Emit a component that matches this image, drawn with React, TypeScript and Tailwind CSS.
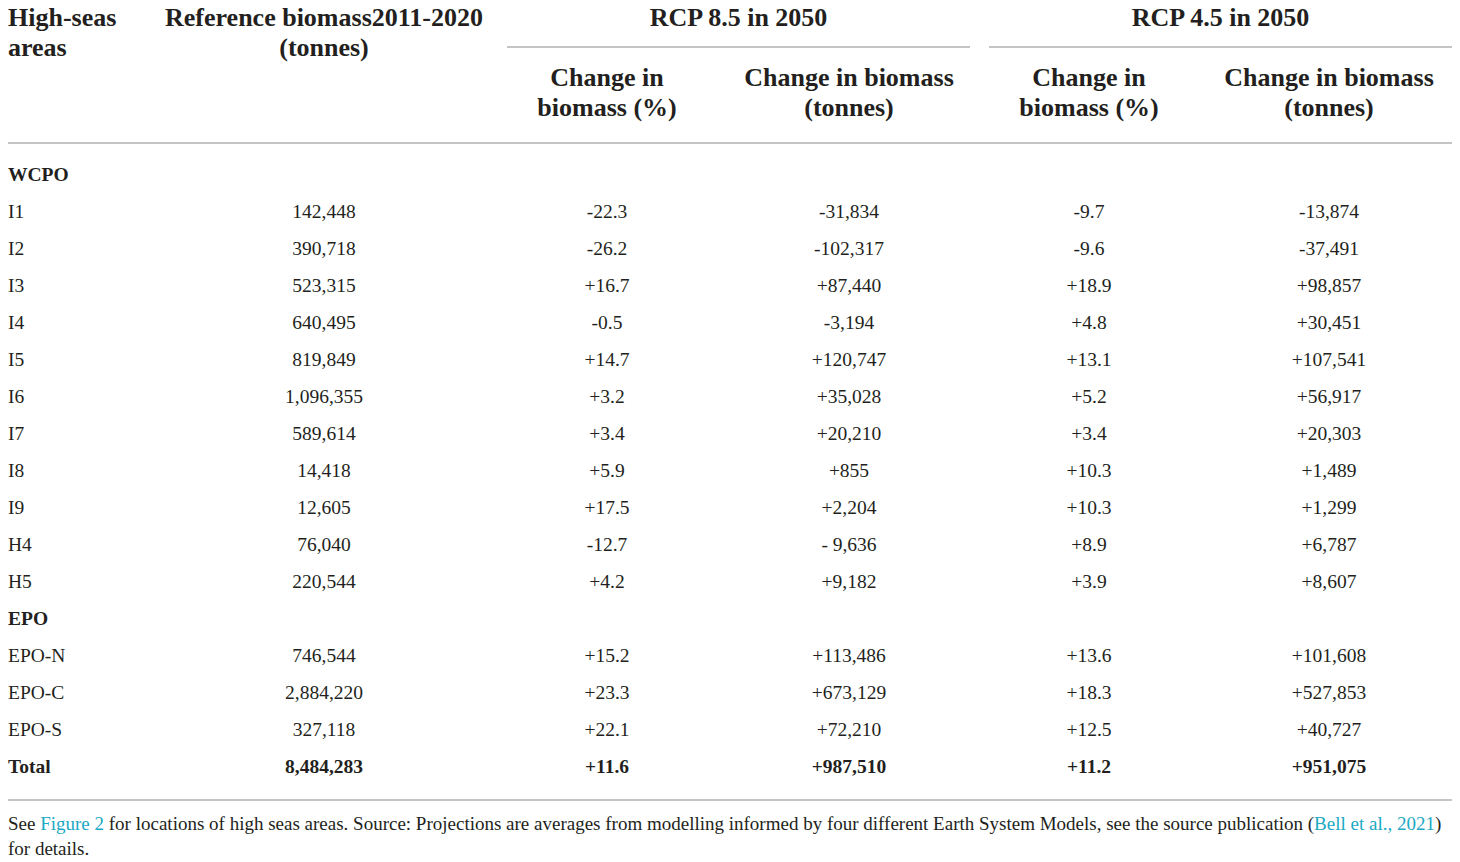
import React from 'react';

type Row = { area: string; ref: string; c85p: string; c85t: string; c45p: string; c45t: string; bold?: boolean };

const wcpo: Row[] = [
  { area: 'I1', ref: '142,448', c85p: '-22.3', c85t: '-31,834', c45p: '-9.7', c45t: '-13,874' },
  { area: 'I2', ref: '390,718', c85p: '-26.2', c85t: '-102,317', c45p: '-9.6', c45t: '-37,491' },
  { area: 'I3', ref: '523,315', c85p: '+16.7', c85t: '+87,440', c45p: '+18.9', c45t: '+98,857' },
  { area: 'I4', ref: '640,495', c85p: '-0.5', c85t: '-3,194', c45p: '+4.8', c45t: '+30,451' },
  { area: 'I5', ref: '819,849', c85p: '+14.7', c85t: '+120,747', c45p: '+13.1', c45t: '+107,541' },
  { area: 'I6', ref: '1,096,355', c85p: '+3.2', c85t: '+35,028', c45p: '+5.2', c45t: '+56,917' },
  { area: 'I7', ref: '589,614', c85p: '+3.4', c85t: '+20,210', c45p: '+3.4', c45t: '+20,303' },
  { area: 'I8', ref: '14,418', c85p: '+5.9', c85t: '+855', c45p: '+10.3', c45t: '+1,489' },
  { area: 'I9', ref: '12,605', c85p: '+17.5', c85t: '+2,204', c45p: '+10.3', c45t: '+1,299' },
  { area: 'H4', ref: '76,040', c85p: '-12.7', c85t: '- 9,636', c45p: '+8.9', c45t: '+6,787' },
  { area: 'H5', ref: '220,544', c85p: '+4.2', c85t: '+9,182', c45p: '+3.9', c45t: '+8,607' },
];

const epo: Row[] = [
  { area: 'EPO-N', ref: '746,544', c85p: '+15.2', c85t: '+113,486', c45p: '+13.6', c45t: '+101,608' },
  { area: 'EPO-C', ref: '2,884,220', c85p: '+23.3', c85t: '+673,129', c45p: '+18.3', c45t: '+527,853' },
  { area: 'EPO-S', ref: '327,118', c85p: '+22.1', c85t: '+72,210', c45p: '+12.5', c45t: '+40,727' },
];

const total: Row = { area: 'Total', ref: '8,484,283', c85p: '+11.6', c85t: '+987,510', c45p: '+11.2', c45t: '+951,075', bold: true };

const cols = 'grid grid-cols-[152px_328px_238px_246px_234px_246px]';

function DataRow({ r }: { r: Row }) {
  const w = r.bold ? 'font-bold' : '';
  return (
    <div className={`${cols} h-[37px] items-center ${w}`}>
      <div>{r.area}</div>
      <div className="text-center">{r.ref}</div>
      <div className="text-center">{r.c85p}</div>
      <div className="text-center">{r.c85t}</div>
      <div className="text-center">{r.c45p}</div>
      <div className="text-center">{r.c45t}</div>
    </div>
  );
}

function Section({ title }: { title: string }) {
  return (
    <div className="h-[37px] flex items-center font-bold">{title}</div>
  );
}

export default function App() {
  return (
    <main
      className="w-[1460px] h-[862px] bg-white px-[8px] text-[#231f20] overflow-hidden"
      style={{ fontFamily: '"Liberation Serif", "DejaVu Serif", serif' }}
    >
      <div className="w-[1444px]">
        {/* header */}
        <div className="text-[26px] leading-[30px] font-bold">
          <div className={`${cols} pt-[3px]`}>
            <div className="row-span-2">High-seas<br />areas</div>
            <div className="row-span-2 text-center">Reference biomass2011-2020<br />(tonnes)</div>
            <div className="col-span-2 ml-[19px] mr-[2px] text-center border-b-2 border-[#c4c4c4] pb-[13px]">RCP 8.5 in 2050</div>
            <div className="col-span-2 ml-[17px] text-center border-b-2 border-[#c4c4c4] pb-[13px]">RCP 4.5 in 2050</div>
            <div className="col-start-3 text-center pt-[15px]">Change in<br />biomass (%)</div>
            <div className="text-center pt-[15px]">Change in biomass<br />(tonnes)</div>
            <div className="text-center pt-[15px]">Change in<br />biomass (%)</div>
            <div className="text-center pt-[15px]">Change in biomass<br />(tonnes)</div>
          </div>
          <div className="mt-[19px] border-b-2 border-[#c4c4c4]" />
        </div>

        {/* body */}
        <div className="text-[19.5px] pt-[12px] pb-[14px]">
          <Section title="WCPO" />
          {wcpo.map((r) => <DataRow key={r.area} r={r} />)}
          <Section title="EPO" />
          {epo.map((r) => <DataRow key={r.area} r={r} />)}
          <DataRow r={total} />
        </div>
        <div className="border-b-2 border-[#c4c4c4]" />

        <p className="text-[19px] leading-[25px] pt-[10px]">
          See <span className="text-[#1ba9c4]">Figure 2</span> for locations of high seas areas. Source: Projections are averages from modelling informed by four different Earth System Models, see the source publication (<span className="text-[#1ba9c4]">Bell et al., 2021</span>)<br />for details.
        </p>
      </div>
    </main>
  );
}
